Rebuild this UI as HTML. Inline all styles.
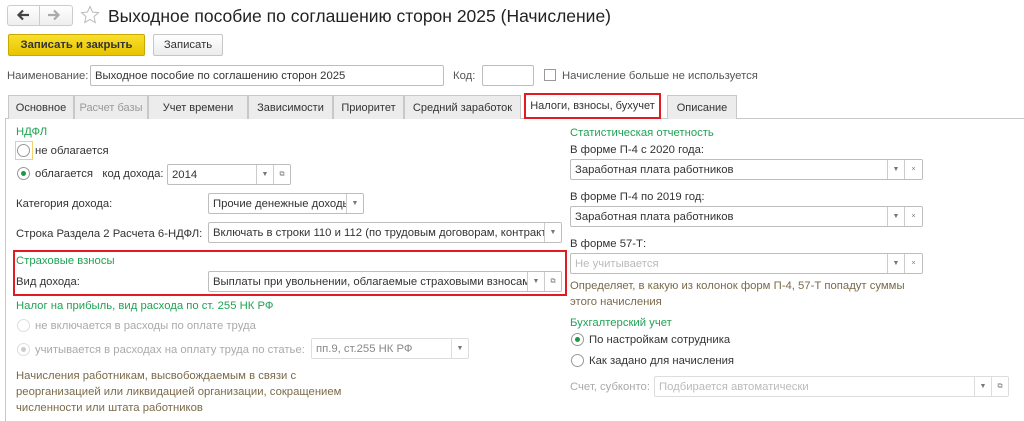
<!DOCTYPE html>
<html><head><meta charset="utf-8"><style>
*{box-sizing:border-box;margin:0;padding:0}
body{width:1024px;height:421px;background:#fff;position:relative;overflow:hidden;font-family:"Liberation Sans",Arial,sans-serif;font-size:11.3px;color:#333}
.a{position:absolute;white-space:nowrap;line-height:14px}
.g{color:#1fa354}
.d{color:#aaa}
.br{color:#7a6a4a}
.in{position:absolute;border:1px solid #bdbdbd;background:#fff;height:21px;border-radius:2px;line-height:20px;padding-left:4px;overflow:hidden;white-space:nowrap;color:#333}
.in.dis{border-color:#ddd;color:#bbb}
.btn{position:absolute;top:0;height:100%;border-left:1px solid #ccc;width:17px;text-align:center;font-size:7px;color:#777;background:#fff}
.tab{position:absolute;top:95px;height:24px;border:1px solid #c8c8c8;background:#ececec;line-height:24px;text-align:center;color:#333;border-bottom:none;font-size:11px}
.rad{position:absolute;width:13px;height:13px;border:1px solid #999;border-radius:50%;background:#fff}
.rad.on::after{content:"";position:absolute;left:3px;top:3px;width:5px;height:5px;border-radius:50%;background:#1a9a45}
.rad.dis{border-color:#ddd}
.rad.dis::after{background:#ccc}
</style></head><body>
<!-- nav -->
<div style="position:absolute;left:7px;top:5px;width:66px;height:21px;border:1px solid #ccc;border-radius:3px;background:linear-gradient(#fff,#eee)"></div>
<div style="position:absolute;left:39px;top:6px;width:1px;height:19px;background:#ccc"></div>
<svg style="position:absolute;left:16px;top:9px" width="14" height="12" viewBox="0 0 14 12"><path d="M13 6H3M7 1.5L2.5 6 7 10.5" fill="none" stroke="#444" stroke-width="2.2"/></svg>
<svg style="position:absolute;left:47px;top:9px" width="14" height="12" viewBox="0 0 14 12"><path d="M1 6H11M7 1.5L11.5 6 7 10.5" fill="none" stroke="#aaa" stroke-width="2.2"/></svg>
<svg style="position:absolute;left:80px;top:5px" width="20" height="20" viewBox="0 0 20 20"><path d="M10 1.5l2.5 5.5 6 .6-4.5 4 1.3 6-5.3-3.1-5.3 3.1 1.3-6-4.5-4 6-.6z" fill="none" stroke="#bbb" stroke-width="1"/></svg>
<div class="a" style="left:108px;top:6px;font-size:17.5px;line-height:20px;color:#222">Выходное пособие по соглашению сторон 2025 (Начисление)</div>
<!-- buttons -->
<div class="a" style="left:8px;top:34px;width:137px;height:22px;background:linear-gradient(#f8df2c,#e8c400);border:1px solid #c9a800;border-radius:2px;text-align:center;line-height:20px;font-weight:bold;color:#333">Записать и закрыть</div>
<div class="a" style="left:153px;top:34px;width:70px;height:22px;background:linear-gradient(#fff,#ececec);border:1px solid #c6c6c6;border-radius:2px;text-align:center;line-height:20px;color:#333">Записать</div>
<!-- name row -->
<div class="a" style="left:7px;top:69px;color:#555">Наименование:</div>
<div class="in" style="left:90px;top:65px;width:354px">Выходное пособие по соглашению сторон 2025</div>
<div class="a" style="left:453px;top:69px;color:#555">Код:</div>
<div class="in" style="left:482px;top:65px;width:52px"></div>
<div style="position:absolute;left:544px;top:69px;width:12px;height:12px;border:1px solid #999;background:#fff"></div>
<div class="a" style="left:562px;top:69px;color:#555">Начисление больше не используется</div>
<!-- tabs -->
<div style="position:absolute;left:5px;top:118px;width:1019px;height:1px;background:#c8c8c8"></div>
<div style="position:absolute;left:5px;top:118px;width:1px;height:303px;background:#c8c8c8"></div>
<div class="tab" style="left:8px;width:66px">Основное</div>
<div class="tab" style="left:74px;width:74px;color:#999">Расчет базы</div>
<div class="tab" style="left:148px;width:100px">Учет времени</div>
<div class="tab" style="left:248px;width:85px">Зависимости</div>
<div class="tab" style="left:333px;width:71px">Приоритет</div>
<div class="tab" style="left:404px;width:117px">Средний заработок</div>
<div class="tab" style="left:524px;top:93px;width:137px;height:26px;background:#fff;border:2px solid #e21b23;border-bottom:2px solid #e21b23;line-height:22px">Налоги, взносы, бухучет</div>
<div class="tab" style="left:667px;width:70px">Описание</div>
<!-- left column -->
<div class="a g" style="left:16px;top:125px">НДФЛ</div>
<div style="position:absolute;left:15px;top:141px;width:18px;height:19px;border:1px solid #f0d070"></div>
<div class="rad" style="left:17px;top:144px"></div>
<div class="a" style="left:35px;top:144px">не облагается</div>
<div class="rad on" style="left:17px;top:167px"></div>
<div class="a" style="left:35px;top:167px">облагается&nbsp;&nbsp; код дохода:</div>
<div class="in" style="left:167px;top:164px;width:124px">2014<span class="btn" style="right:17px">▼</span><span class="btn" style="right:0">⧉</span></div>
<div class="a" style="left:16px;top:197px">Категория дохода:</div>
<div class="in" style="left:208px;top:193px;width:156px">Прочие денежные доходы<span class="btn" style="right:0">▼</span></div>
<div class="a" style="left:16px;top:227px">Строка Раздела 2 Расчета 6-НДФЛ:</div>
<div class="in" style="left:208px;top:222px;width:354px">Включать в строки 110 и 112 (по трудовым договорам, контракт<span class="btn" style="right:0">▼</span></div>
<div style="position:absolute;left:13px;top:250px;width:554px;height:46px;border:2px solid #e21b23"></div>
<div class="a g" style="left:16px;top:254px">Страховые взносы</div>
<div class="a" style="left:16px;top:275px">Вид дохода:</div>
<div class="in" style="left:208px;top:271px;width:354px">Выплаты при увольнении, облагаемые страховыми взносам<span class="btn" style="right:17px">▼</span><span class="btn" style="right:0">⧉</span></div>
<div class="a g" style="left:16px;top:299px">Налог на прибыль, вид расхода по ст. 255 НК РФ</div>
<div class="rad dis" style="left:17px;top:319px"></div>
<div class="a d" style="left:35px;top:319px">не включается в расходы по оплате труда</div>
<div class="rad on dis" style="left:17px;top:343px"></div>
<div class="a d" style="left:35px;top:343px">учитывается в расходах на оплату труда по статье:</div>
<div class="in dis" style="left:311px;top:338px;width:158px;color:#888">пп.9, ст.255 НК РФ<span class="btn" style="right:0;border-color:#ddd">▼</span></div>
<div class="a br" style="left:16px;top:368px;line-height:16px">Начисления работникам, высвобождаемым в связи с<br>реорганизацией или ликвидацией организации, сокращением<br>численности или штата работников</div>
<!-- right column -->
<div class="a g" style="left:570px;top:126px">Статистическая отчетность</div>
<div class="a" style="left:570px;top:143px">В форме П-4 с 2020 года:</div>
<div class="in" style="left:570px;top:159px;width:353px">Заработная плата работников<span class="btn" style="right:18px">▼</span><span class="btn" style="right:0;width:18px">×</span></div>
<div class="a" style="left:570px;top:190px">В форме П-4 по 2019 год:</div>
<div class="in" style="left:570px;top:206px;width:353px">Заработная плата работников<span class="btn" style="right:18px">▼</span><span class="btn" style="right:0;width:18px">×</span></div>
<div class="a" style="left:570px;top:237px">В форме 57-Т:</div>
<div class="in" style="left:570px;top:253px;width:353px;color:#bbb">Не учитывается<span class="btn" style="right:18px">▼</span><span class="btn" style="right:0;width:18px">×</span></div>
<div class="a br" style="left:570px;top:278px;line-height:16px">Определяет, в какую из колонок форм П-4, 57-Т попадут суммы<br>этого начисления</div>
<div class="a g" style="left:570px;top:316px">Бухгалтерский учет</div>
<div class="rad on" style="left:571px;top:333px"></div>
<div class="a" style="left:589px;top:333px">По настройкам сотрудника</div>
<div class="rad" style="left:571px;top:354px"></div>
<div class="a" style="left:589px;top:354px">Как задано для начисления</div>
<div class="a d" style="left:570px;top:380px">Счет, субконто:</div>
<div class="in dis" style="left:654px;top:376px;width:355px">Подбирается автоматически<span class="btn" style="right:17px;border-color:#ddd">▼</span><span class="btn" style="right:0;border-color:#ddd">⧉</span></div>
</body></html>
